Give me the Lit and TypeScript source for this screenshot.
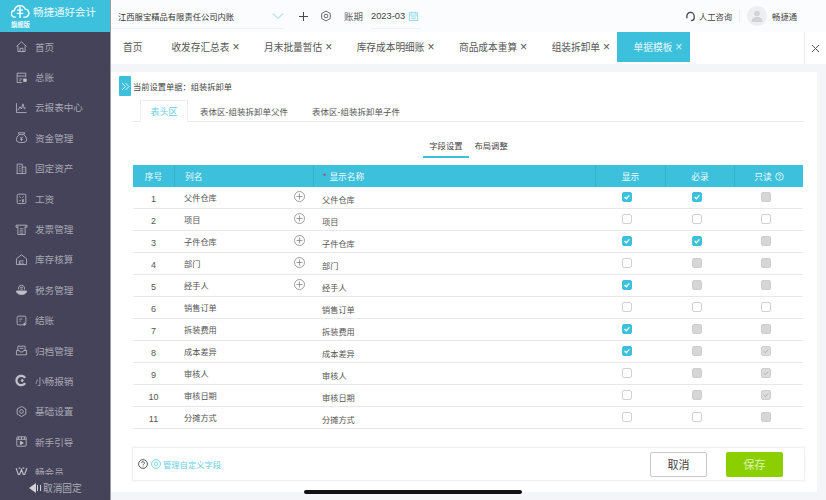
import { LitElement, html, css, svg } from "lit";
import { customElement } from "lit/decorators.js";

const icons: Record<string, unknown> = {
  home: svg`<path d="M2 9l7-6.500L16 9M4 8v8h10V8M7 16v-4.500h4V16"/>`,
  ledger: svg`<path d="M15 8V3H3v13h7M3 7h12M6 11h4M6 13.500h2"/><rect x="12" y="11" width="3.500" height="3.500" fill="currentColor"/>`,
  chart: svg`<path d="M2 3v13h14M4 13l3-5 2 3 2-7 2 7 2-2"/>`,
  money: svg`<path d="M6 5L4.500 2.500h9L12 5M6 5h6c3 2 4 5 4 7 0 3-2 4-7 4s-7-1-7-4c0-2 1-5 4-7zM7 8l2 2 2-2M9 10v4M7 11.500h4"/>`,
  asset: svg`<path d="M3 16V3h7v13M10 7h5v9H2M5.500 6.500h2M5.500 9.500h2M5.500 12.500h2M12 10h1M12 13h1"/>`,
  wage: svg`<rect x="3" y="3" width="12" height="13" rx="1.500"/><path d="M6 6l2 2M12 6l-2 2M6 12h2M10 10l2 4M12 10l-2 4"/>`,
  invoice: svg`<path d="M1.500 3h15v3h-2M1.500 3v3h2M4 4v12h10V4M6.500 8h5M6.500 11h5M6.500 14h5"/>`,
  stock: svg`<path d="M2 8l7-5.500L16 8v8H2zM6 16v-5h6M8 13v3M11 13v3"/>`,
  tax: svg`<path d="M2 11h14c0 3-3 5-7 5s-7-2-7-5z" fill="currentColor"/><path d="M5 9c-1-3 1-6 4-6s5 3 4 6M7 6h4M7 8.500h4"/>`,
  settle: svg`<rect x="3" y="3" width="12" height="12" rx="1.500"/><path d="M6 7h4M6 10h2M13 12v4M11 14h4"/>`,
  archive: svg`<path d="M4 9V3h10v6M2 9h4l1 2h4l1-2h4v6H2zM6.500 6h5"/>`,
  xc: svg`<path d="M14 5.500A6.500 6.500 0 1 0 14 12.500" stroke-width="3.200"/><circle cx="10" cy="9" r="1.500" fill="currentColor"/>`,
  gear: svg`<path d="M9 2l6 3.500v7L9 16l-6-3.500v-7z" stroke-linejoin="round"/><circle cx="9" cy="9" r="2.500"/>`,
  guide: svg`<rect x="2.500" y="2.500" width="13" height="13" rx="1"/><path d="M2.500 6h13M5 2.500v3.500M9 2.500v3.500M13 2.500v3.500"/><path d="M7.500 8.500l4 2.500-4 2.500z" fill="currentColor"/>`,
  vip: svg`<path d="M1.500 3l4 11 3.500-9 3.500 9 4-11M5 3h2.500M10.500 3H13" stroke-width="1.600"/>`,
};

const menu: [string, string][] = [
  ["home", "首页"], ["ledger", "总账"], ["chart", "云报表中心"], ["money", "资金管理"], ["asset", "固定资产"],
  ["wage", "工资"], ["invoice", "发票管理"], ["stock", "库存核算"], ["tax", "税务管理"], ["settle", "结账"],
  ["archive", "归档管理"], ["xc", "小畅报销"], ["gear", "基础设置"], ["guide", "新手引导"], ["vip", "畅会员"],
];

const tabs = ["收发存汇总表", "月末批量暂估", "库存成本明细账", "商品成本重算", "组装拆卸单"];

// c = checked, u = unchecked, d = disabled, k = disabled and checked
const rows: [string, boolean, string, string, string][] = [
  ["父件仓库", true, "c", "c", "d"],
  ["项目", true, "u", "u", "u"],
  ["子件仓库", true, "c", "c", "d"],
  ["部门", true, "u", "d", "d"],
  ["经手人", true, "c", "d", "d"],
  ["销售订单", false, "u", "u", "u"],
  ["拆装费用", false, "c", "d", "d"],
  ["成本差异", false, "c", "d", "k"],
  ["审核人", false, "u", "d", "k"],
  ["审核日期", false, "u", "d", "k"],
  ["分摊方式", false, "u", "u", "d"],
];

@customElement("app-root")
export class AppRoot extends LitElement {
  static styles = css`
    :host { display: block; width: 826px; height: 500px; overflow: hidden; position: relative;
      font-family: "Liberation Sans", "Noto Sans CJK SC", sans-serif; color: #555; font-size: 9px; background: #f3f5f8; }
    * { box-sizing: border-box; }
    .app { display: flex; width: 826px; height: 500px; }
    .side { width: 111px; flex: none; display: flex; flex-direction: column; background: #45435a; border-right: 1px solid #9a9aa2; height: 500px; }
    .logo { height: 32px; flex: none; background: #3cc0dc; color: #fff; display: grid; grid-template-columns: 22px auto; grid-template-rows: 20px 12px; padding-left: 11px; }
    .logo svg { width: 19px; height: 15px; margin-top: 4px; fill: none; stroke: #fff; stroke-width: 1.500; }
    .logo b { font-weight: 400; font-size: 10.500px; line-height: 24px; white-space: nowrap; color: #eefafc; }
    .logo i { font-style: normal; font-size: 6.300px; line-height: 10px; grid-column: 1 / 3; white-space: nowrap; font-weight: 700; color: #eefafc; }
    .menu { flex: 1; min-height: 0; overflow: hidden; margin-top: -0.500px; }
    .mi { height: 30.400px; display: flex; align-items: center; padding-left: 15px; color: #a8a8b3; font-size: 9.600px; gap: 7px; }
    .mi svg { width: 13px; height: 13px; fill: none; stroke: #c0c0c9; stroke-width: 1.100; flex: none; color: #c0c0c9; }
    .unpin { height: 25px; flex: none; display: flex; align-items: center; padding-left: 29px; color: #aeaeb8; font-size: 9.700px; }
    .unpin .arrow { width: 0; height: 0; border: 5px solid transparent; border-right: 7px solid #d0d0d6; border-left: 0; margin-right: 1px; }
    .unpin .bars { width: 4px; height: 6px; border-left: 1px solid #d0d0d6; border-right: 1px solid #d0d0d6; margin-right: 2px; }
    .main { flex: 1; min-width: 0; display: flex; flex-direction: column; }
    .top { height: 32px; flex: none; background: #fbfcfd; display: flex; align-items: center; color: #444; }
    .company { width: 173px; height: 26px; padding-left: 7px; display: flex; align-items: center; justify-content: space-between; border-bottom: 1px solid #eef0f3; font-size: 8.300px; color: #333; }
    .company svg { width: 12px; height: 8px; fill: none; stroke: #7fd3e6; stroke-width: 1; }
    .tool { fill: none; stroke: #444; flex: none; }
    .plus { width: 9px; height: 9px; margin-left: 15px; stroke-width: 1.300; }
    .cog { width: 12px; height: 12px; margin-left: 12px; stroke-width: 1.200; }
    .period { margin-left: 12px; color: #666; font-size: 9.500px; }
    .date { margin-left: 8px; display: flex; align-items: center; gap: 3px; height: 26px; border-bottom: 1px solid #eef0f3; color: #444; font-size: 9.300px; padding-right: 2px; }
    .date svg { width: 11px; height: 12px; fill: none; stroke: #8fd9e9; stroke-width: 1; }
    .grow { flex: 1; }
    .help { display: flex; align-items: center; gap: 3px; font-size: 8.300px; color: #444; }
    .help svg { width: 11px; height: 11px; fill: none; stroke: #444; stroke-width: 1.400; }
    .sep { width: 1px; height: 14px; background: #eceef1; margin: 0 7px; }
    .avatar { width: 20px; height: 20px; border-radius: 50%; background: #eceef0; display: flex; align-items: center; justify-content: center; }
    .avatar svg { width: 12px; height: 12px; fill: #cfd2d6; }
    .user { margin: 0 29px 0 5px; font-size: 8.300px; color: #444; }
    .tabs { height: 32px; flex: none; background: #fff; display: flex; align-items: flex-start; font-size: 9.700px; color: #555; }
    .tab { display: flex; align-items: center; white-space: nowrap; height: 30px; }
    .tab u { text-decoration: none; margin-left: 3px; color: #555; font-size: 12px; line-height: 1; }
    .home { margin: 0 29px 0 12px; }
    .t { margin-right: 24.500px; }
    .active { background: #3cc0dc; color: #e8f8fc; width: 73px; padding-left: 17px; margin-left: -18px; }
    .active u { color: #d8f2f8; }
    .closeall { margin-left: auto; width: 22px; border-left: 1px solid #e8eaed; display: flex; align-items: center; justify-content: center; height: 32px; }
    .closeall svg { width: 9px; height: 9px; stroke: #555; fill: none; }
    .pad { flex: 1; min-height: 0; padding: 8px 9px 8px 0; }
    .panel { height: 100%; background: #fff; padding: 0 13px 0 22px; display: flex; flex-direction: column; position: relative; }
    .expand { position: absolute; left: 8px; top: 4px; width: 12px; height: 20px; border-radius: 1px; background: #3cc0dc; display: flex; align-items: center; justify-content: center; }
    .expand svg { width: 9px; height: 9px; stroke: #d8f4fa; fill: none; }
    .cur { height: 28px; flex: none; display: flex; align-items: center; font-size: 8.250px; color: #444; }
    .sub { height: 22px; display: flex; border-bottom: 1px solid #e8eaed; padding-left: 7px; flex: none; font-size: 8.500px; color: #555; }
    .sub div { display: flex; align-items: center; justify-content: center; }
    .sub .on { width: 48px; height: 22px; color: #69cee3; border: 1px solid #eceef1; border-bottom: 1px solid #fff; background: #fff; font-size: 9px; }
    .sub .s1, .sub .s2 { width: 112px; }
    .seg { height: 43px; display: flex; justify-content: center; align-items: flex-end; font-size: 8.300px; flex: none; }
    .seg div { height: 21px; line-height: 19px; padding: 0 6px; color: #444; margin-bottom: 7px; }
    .seg .on { border-bottom: 2px solid #3cc0dc; }
    .grid { display: grid; grid-template-columns: 41px 139px 282px 70px 69px 69px; font-size: 8.200px; color: #555; flex: none; }
    .th { height: 22px; background: #3cc0dc; color: #f2fbfd; display: flex; align-items: center; border-left: 1px solid #37b2cd; font-size: 8.700px; }
    .th.first { border-left: 0; }
    .th.c { justify-content: center; }
    .th.l { padding-left: 10px; }
    .th.n { padding-left: 9px; }
    .star { color: #b0436e; margin-right: 3px; }
    .th svg { width: 9px; height: 9px; margin-left: 3px; fill: none; stroke: #f2fbfd; stroke-width: 1; }
    .td { height: 22px; border-bottom: 1px solid #e6e8eb; display: flex; align-items: center; justify-content: center; }
    .td.num { font-size: 9px; padding-top: 2px; }
    .td.name { justify-content: space-between; padding: 0 8px 2px 10px; }
    .td.disp { justify-content: flex-start; padding: 2px 0 0 9px; }
    .td.ck { padding: 0 6px 1px 0; }
    .add { width: 11px; height: 11px; fill: none; stroke: #777; stroke-width: .7; flex: none; }
    .box { width: 10px; height: 10px; border-radius: 2px; border: 1px solid #cfd1d4; background: #fff; display: flex; align-items: center; justify-content: center; }
    .box svg { width: 8px; height: 8px; fill: none; stroke-width: 1.500; display: block; }
    .box.c { background: #3cc0dc; border-color: #3cc0dc; }
    .box.c svg { stroke: #fff; }
    .box.d { background: #d6d6d6; border-color: #cfcfcf; }
    .box.k { background: #dcdcdc; border-color: #cfcfcf; }
    .box.k svg { stroke: #aaa; stroke-width: 1; }
    .foot { margin: 18px -1px 0 -1px; height: 34px; flex: none; border: 1px solid #f1f2f4; box-shadow: 0 0 2px #eef0f2; display: flex; align-items: center; padding: 0 21px 0 5px; }
    .foot svg { width: 10px; height: 10px; fill: none; flex: none; }
    .q { stroke: #444; stroke-width: .9; margin-right: 3px; }
    .manage { stroke: #69cee3; stroke-width: .9; margin-right: 2px; }
    .link { color: #69cee3; font-size: 8.300px; }
    .btn { width: 57px; height: 25px; border-radius: 2px; display: flex; align-items: center; justify-content: center; font-size: 11px; }
    .cancel { border: 1px solid #c6c8cb; background: #fff; color: #444; margin-right: 19px; }
    .save { background: #8ccf00; color: #dff5b0; }
    .hbar { position: absolute; left: 304px; top: 490px; width: 218px; height: 4px; border-radius: 2px; background: #111; }
  `;

  private icon(name: string) {
    return html`<svg viewBox="0 0 18 18">${icons[name]}</svg>`;
  }

  private check(kind: string) {
    const tick = kind === "c" || kind === "k";
    return html`<div class="box ${kind}">${tick ? html`<svg viewBox="0 0 10 10"><path d="M2 5l2.200 2.200L8 3"/></svg>` : ""}</div>`;
  }

  render() {
    return html`<div class="app">
      <aside class="side">
        <div class="logo">
          <svg viewBox="0 0 20 16"><path d="M5 14H4a3.500 3.500 0 0 1-.5-7A6 6 0 0 1 15 5.500 4.300 4.300 0 0 1 15.500 14H13"/><path d="M9.500 3v12M6.500 6.500h6M6 10h7"/></svg>
          <b>畅捷通好会计</b>
          <i>旗舰版</i>
        </div>
        <nav class="menu">
          ${menu.map(([ic, label]) => html`<div class="mi">${this.icon(ic)}<span>${label}</span></div>`)}
        </nav>
        <div class="unpin"><span class="arrow"></span><span class="bars"></span><span>取消固定</span></div>
      </aside>
      <div class="main">
        <header class="top">
          <div class="company"><span>江西服宝精品有限责任公司内账</span><svg viewBox="0 0 12 8"><path d="M1 1.500l5 5 5-5"/></svg></div>
          <svg class="tool plus" viewBox="0 0 12 12"><path d="M6 0v12M0 6h12"/></svg>
          <svg class="tool cog" viewBox="0 0 18 18"><path d="M9 1.500l6.500 3.750v7.500L9 16.500l-6.500-3.750v-7.500z" stroke-linejoin="round"/><circle cx="9" cy="9" r="2.800"/></svg>
          <span class="period">账期</span>
          <div class="date"><span>2023-03</span><svg viewBox="0 0 12 12"><rect x="1.500" y="2.500" width="9" height="8.500"/><path d="M1.500 5h9M4 1v2.500M8 1v2.500M3.500 7h5M3.500 9h5"/></svg></div>
          <div class="grow"></div>
          <div class="help"><svg viewBox="0 0 12 12"><path d="M2 8V5.500a4 4 0 0 1 8 0V8M10 8c0 1.500-1.500 2.500-3.500 2.500"/></svg><span>人工咨询</span></div>
          <div class="sep"></div>
          <div class="avatar"><svg viewBox="0 0 12 12"><circle cx="6" cy="3.500" r="2.800"/><path d="M.5 12c0-3.500 2.500-5 5.500-5s5.500 1.500 5.500 5z"/></svg></div>
          <span class="user">畅捷通</span>
        </header>
        <div class="tabs">
          <div class="tab home">首页</div>
          ${tabs.map(t => html`<div class="tab t">${t}<u>×</u></div>`)}
          <div class="tab active">单据模板<u>×</u></div>
          <div class="closeall"><svg viewBox="0 0 9 9"><path d="M1 1l7 7M8 1L1 8"/></svg></div>
        </div>
        <div class="pad">
          <section class="panel">
            <div class="expand"><svg viewBox="0 0 9 9"><path d="M1 1l3.500 3.500L1 8M4.500 1L8 4.500 4.500 8"/></svg></div>
            <div class="cur">当前设置单据：组装拆卸单</div>
            <div class="sub"><div class="on">表头区</div><div class="s1">表体区-组装拆卸单父件</div><div class="s2">表体区-组装拆卸单子件</div></div>
            <div class="seg"><div class="on">字段设置</div><div>布局调整</div></div>
            <div class="grid">
              <div class="th c first">序号</div>
              <div class="th l">列名</div>
              <div class="th n"><span class="star">*</span>显示名称</div>
              <div class="th c">显示</div>
              <div class="th c">必录</div>
              <div class="th c">只读<svg viewBox="0 0 10 10"><circle cx="5" cy="5" r="4.200"/><path d="M3.700 4a1.300 1.300 0 1 1 1.900 1.200c-.4.200-.6.500-.6 1M5 7.200v.6"/></svg></div>
              ${rows.map((r, i) => html`
                <div class="td num">${i + 1}</div>
                <div class="td name"><span>${r[0]}</span>${r[1] ? html`<svg class="add" viewBox="0 0 11 11"><circle cx="5.500" cy="5.500" r="5"/><path d="M5.500 2.500v6M2.500 5.500h6"/></svg>` : ""}</div>
                <div class="td disp">${r[0]}</div>
                <div class="td ck">${this.check(r[2])}</div>
                <div class="td ck">${this.check(r[3])}</div>
                <div class="td ck">${this.check(r[4])}</div>`)}
            </div>
            <div class="foot">
              <svg class="q" viewBox="0 0 10 10"><circle cx="5" cy="5" r="4.400"/><path d="M3.600 4a1.400 1.400 0 1 1 2 1.300c-.4.200-.6.500-.6 1M5 7.200v.6"/></svg>
              <svg class="manage" viewBox="0 0 10 10"><circle cx="5" cy="5" r="4.400"/><circle cx="5" cy="5" r="1.800"/></svg>
              <span class="link">管理自定义字段</span>
              <div class="grow"></div>
              <div class="btn cancel">取消</div>
              <div class="btn save">保存</div>
            </div>
          </section>
        </div>
      </div>
    </div>
    <div class="hbar"></div>`;
  }
}
